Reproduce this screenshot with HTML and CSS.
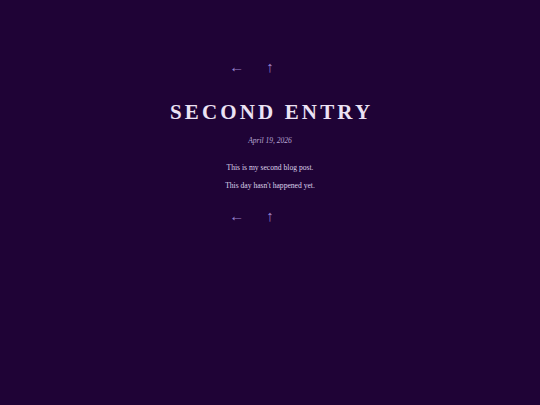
FILE: index.html
```html
<!DOCTYPE html>
<html>
<head>
<meta charset="utf-8">
<link rel="stylesheet" href="styles.css">
</head>
<body>
<main class="page">
  <nav class="nav"><a class="arrow" href="#">←</a><a class="arrow" href="#">↑</a><span class="arrow placeholder">→</span></nav>
  <h1 class="title">Second Entry</h1>
  <p class="date">April 19, 2026</p>
  <div class="content">
    <p>This is my second blog post.</p>
    <p>This day hasn't happened yet.</p>
  </div>
  <nav class="nav"><a class="arrow" href="#">←</a><a class="arrow" href="#">↑</a><span class="arrow placeholder">→</span></nav>
</main>
</body>
</html>
```
FILE: styles.css
```css
html, body {
  margin: 0;
  padding: 0;
  background: #1f0336;
  height: 100%;
}
body {
  font-family: "Liberation Serif", "DejaVu Serif", serif;
  color: #e6dcf0;
}
.page {
  display: flex;
  flex-direction: column;
  align-items: center;
  padding-top: 57px;
}
.nav {
  display: flex;
  gap: 22px;
  font-size: 15px;
  line-height: 20px;
}
.arrow {
  color: #9a82cc;
  text-decoration: none;
}
.placeholder {
  visibility: hidden;
}
.title {
  margin: 22px 0 0;
  font-size: 21px;
  line-height: 26px;
  font-weight: bold;
  text-transform: uppercase;
  letter-spacing: 0.15em;
  margin-right: -0.15em;
  color: #ece2f4;
}
.date {
  margin: 11px 0 0;
  font-size: 7.5px;
  font-style: italic;
  color: #b9a8d4;
}
.content {
  margin-top: 18px;
  font-size: 7.6px;
  text-align: center;
  color: #ddd2ea;
}
.content p {
  margin: 0 0 9px;
}
.content + .nav {
  margin-top: 7px;
}
```
